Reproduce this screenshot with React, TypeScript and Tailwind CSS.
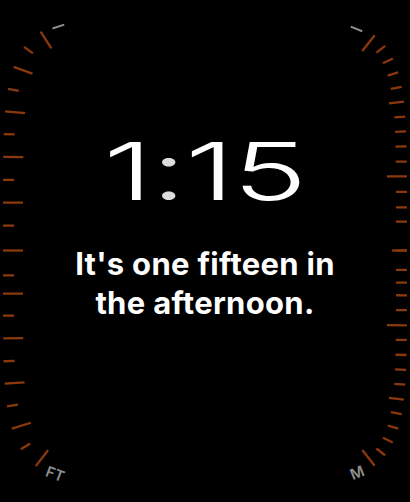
import React from "react";

// Watch screen outline: a superellipse, ticks sit on its outer edge
const CX = 205;
const CY = 250.5;
const A = 202;
const B = 235;
const N = 5.5;

type Pt = { x: number; y: number; s: number };

function sampleSide(sx: number): Pt[] {
    const pts: Pt[] = [];
    const steps = 3000;
    let s = 0;
    for (let i = 0; i <= steps; i++) {
        const t = -Math.PI / 2 + (Math.PI * i) / steps;
        const c = Math.cos(t);
        const sn = Math.sin(t);
        const x = CX + sx * A * Math.pow(Math.max(c, 0), 2 / N);
        const y = CY + B * Math.sign(sn) * Math.pow(Math.abs(sn), 2 / N);
        if (i > 0) s += Math.hypot(x - pts[i - 1].x, y - pts[i - 1].y);
        pts.push({ x, y, s });
    }
    return pts;
}

function pointAt(pts: Pt[], sx: number, s: number) {
    let i = 1;
    while (i < pts.length - 2 && pts[i].s < s) i++;
    const p = pts[i];
    const tx0 = pts[i + 1].x - pts[i - 1].x;
    const ty0 = pts[i + 1].y - pts[i - 1].y;
    const l = Math.hypot(tx0, ty0) || 1;
    const tx = tx0 / l;
    const ty = ty0 / l;
    // inward normal
    const nx = sx * -ty;
    const ny = sx * tx;
    return { x: p.x, y: p.y, tx, ty, nx, ny, angle: (Math.atan2(ty, tx) * 180) / Math.PI };
}

const left = sampleSide(-1);
const right = sampleSide(1);
const leftMid = left[1500].s;
const rightMid = right[1500].s;

type Tick = { x1: number; y1: number; x2: number; y2: number };

function makeTick(pts: Pt[], sx: number, s: number, len: number): Tick {
    const p = pointAt(pts, sx, s);
    return { x1: p.x, y1: p.y, x2: p.x + p.nx * len, y2: p.y + p.ny * len };
}

const LEFT_STEP = 22.7;
const RIGHT_STEP = 14.9;
const LEFT_SHIFT = -3;

const leftTicks: Tick[] = Array.from({ length: 21 }, (_, k) =>
    makeTick(left, -1, leftMid + LEFT_SHIFT + (k - 10) * LEFT_STEP, k % 2 === 0 ? 20 : 11)
);

const rightTicks: Tick[] = Array.from({ length: 31 }, (_, k) =>
    makeTick(right, 1, rightMid + (k - 15) * RIGHT_STEP, k % 10 === 0 ? 20 : k % 5 === 0 ? 15 : 11)
);

function labelAt(pts: Pt[], sx: number, s: number, inset: number, flip: boolean) {
    const p = pointAt(pts, sx, s);
    return {
        x: p.x + p.nx * inset,
        y: p.y + p.ny * inset,
        tx: p.tx,
        ty: p.ty,
        angle: flip ? p.angle + 180 : p.angle,
    };
}

const leftTopDash = labelAt(left, -1, leftMid + LEFT_SHIFT - 10 * LEFT_STEP - 18.5, 3, false);
const rightTopDash = labelAt(right, 1, rightMid - 15 * RIGHT_STEP - 19.5, 3.5, false);
const ftLabel = labelAt(left, -1, leftMid + LEFT_SHIFT + 10 * LEFT_STEP + 21, 2.5, false);
const mLabel = labelAt(right, 1, rightMid + 15 * RIGHT_STEP + 19, 3, true);

const TICK = "#8c380d";
const LABEL = "#8e8e8e";

function Dash({ d }: { d: ReturnType<typeof labelAt> }) {
    const h = 6.2;
    return (
        <line
            x1={d.x - d.tx * h}
            y1={d.y - d.ty * h}
            x2={d.x + d.tx * h}
            y2={d.y + d.ty * h}
            stroke={LABEL}
            strokeWidth={2}
        />
    );
}

function Label({ d, text }: { d: ReturnType<typeof labelAt>; text: string }) {
    return (
        <text
            x={d.x}
            y={d.y}
            transform={`rotate(${d.angle} ${d.x} ${d.y})`}
            textAnchor="middle"
            dominantBaseline="central"
            fontSize={15}
            fontWeight={600}
            fill={LABEL}
            fontFamily="Inter, 'Noto Sans', sans-serif"
        >
            {text}
        </text>
    );
}

function Gauge() {
    return (
        <svg className="absolute inset-0" width={410} height={502} viewBox="0 0 410 502">
            {leftTicks.map((t, i) => (
                <line key={`l${i}`} {...t} stroke={TICK} strokeWidth={2.3} />
            ))}
            {rightTicks.map((t, i) => (
                <line key={`r${i}`} {...t} stroke={TICK} strokeWidth={2.3} />
            ))}
            <Dash d={leftTopDash} />
            <Dash d={rightTopDash} />
            <Label d={ftLabel} text="FT" />
            <Label d={mLabel} text="M" />
        </svg>
    );
}

export default function App() {
    return (
        <div className="relative w-[410px] h-[502px] bg-black overflow-hidden font-['Inter','Noto_Sans',sans-serif]">
            <Gauge />
            <div className="relative flex flex-col items-center pt-[131px]">
                <div className="h-[80px] text-[80px] leading-[80px] font-light text-white scale-x-[1.57] tracking-[-1px]">
                    1<span className="text-[#dcdcdc]">:</span>15
                </div>
                <p className="mt-[34px] text-center text-[31px] leading-[38.7px] font-bold text-white tracking-[0.3px]">
                    It's one fifteen in
                    <br />
                    the afternoon.
                </p>
            </div>
        </div>
    );
}
